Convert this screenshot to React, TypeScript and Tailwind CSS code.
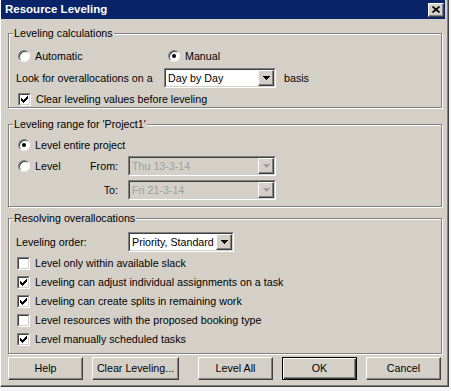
import { ReactNode } from "react";

const raised =
  "border border-t-white border-l-white border-r-[#404040] border-b-[#404040] shadow-[inset_-1px_-1px_0_#808080] bg-[#d4d0c8]";

const Arrow = ({ disabled }: { disabled?: boolean }) => (
  <svg width="7" height="4" viewBox="0 0 7 4" shapeRendering="crispEdges">
    <g fill={disabled ? "#a0a0a0" : "#000"}>
      <rect x="0" y="0" width="7" height="1" />
      <rect x="1" y="1" width="5" height="1" />
      <rect x="2" y="2" width="3" height="1" />
      <rect x="3" y="3" width="1" height="1" />
    </g>
  </svg>
);

const Dropdown = ({ value, width, disabled }: { value: string; width: string; disabled?: boolean }) => (
  <div className={`${width} h-[20px] border border-t-[#808080] border-l-[#808080] border-r-white border-b-white`}>
    <div
      className={`flex h-full border border-t-[#404040] border-l-[#404040] border-r-[#d4d0c8] border-b-[#d4d0c8] ${
        disabled ? "bg-[#d4d0c8] text-[#a0a0a0]" : "bg-white text-black"
      }`}
    >
      <div className="flex-1 flex items-center pl-[2px] whitespace-nowrap overflow-hidden">{value}</div>
      <div className={`w-[16px] h-full flex items-center justify-center ${raised}`}>
        <Arrow disabled={disabled} />
      </div>
    </div>
  </div>
);

const Check = () => (
  <svg width="7" height="7" viewBox="0 0 7 7" shapeRendering="crispEdges">
    <g fill="#000">
      <rect x="0" y="2" width="1" height="3" />
      <rect x="1" y="3" width="1" height="3" />
      <rect x="2" y="4" width="1" height="3" />
      <rect x="3" y="3" width="1" height="3" />
      <rect x="4" y="2" width="1" height="3" />
      <rect x="5" y="1" width="1" height="3" />
      <rect x="6" y="0" width="1" height="3" />
    </g>
  </svg>
);

const Checkbox = ({ label, checked }: { label: string; checked?: boolean }) => (
  <div className="flex items-center h-[19px]">
    <div className="w-[13px] h-[13px] border border-t-[#808080] border-l-[#808080] border-r-white border-b-white">
      <div className="w-full h-full bg-white border border-t-[#404040] border-l-[#404040] border-r-[#d4d0c8] border-b-[#d4d0c8] flex items-center justify-center">
        {checked && <Check />}
      </div>
    </div>
    <span className="ml-[5px]">{label}</span>
  </div>
);

const Radio = ({ label, checked }: { label: string; checked?: boolean }) => (
  <div className="flex items-center">
    <div className="w-[12px] h-[12px] rounded-full bg-white border border-t-[#808080] border-l-[#808080] border-r-white border-b-[#f0f0f0] shadow-[inset_1px_1px_0_#404040] flex items-center justify-center">
      {checked && <div className="w-[4px] h-[4px] rounded-full bg-black" />}
    </div>
    <span className="ml-[5px]">{label}</span>
  </div>
);

const Group = ({ title, className, children }: { title: string; className: string; children: ReactNode }) => (
  <div
    className={`relative ml-[7px] w-[434px] border border-[#808080] shadow-[inset_1px_1px_0_#fff,1px_1px_0_#fff] pl-[7px] ${className}`}
  >
    <span className="absolute left-[4px] top-[-7px] bg-[#d4d0c8] px-[1px] leading-[13px]">{title}</span>
    {children}
  </div>
);

const Button = ({ label, className, isDefault }: { label: string; className: string; isDefault?: boolean }) => (
  <div
    className={`h-[23px] flex items-center justify-center bg-[#d4d0c8] ${
      isDefault
        ? "border border-black shadow-[inset_1px_1px_0_#fff,inset_-1px_-1px_0_#404040,inset_-2px_-2px_0_#808080]"
        : raised
    } ${className}`}
  >
    {label}
  </div>
);

export default function App() {
  return (
    <div className="w-[451px] h-[391px] bg-[#f4f4f4] text-[10.7px] text-black font-['Liberation_Sans',Arial,sans-serif]">
      <div className="w-[449px] h-[387px] bg-[#d4d0c8] border-l border-l-white border-r border-r-[#404040] border-b border-b-[#404040] shadow-[inset_-1px_-1px_0_#808080] flex flex-col">
        <div className="h-[19px] mr-[3px] bg-[#0a246a] flex items-center justify-between pl-[4px] pr-[1px]">
          <span className="text-white font-bold text-[11.5px]">Resource Leveling</span>
          <div className={`w-[16px] h-[14px] flex items-center justify-center ${raised}`}>
            <svg width="8" height="7" viewBox="0 0 8 7">
              <path d="M0.5 0.5 L7.5 6.5 M7.5 0.5 L0.5 6.5" stroke="#000" strokeWidth="1.6" />
            </svg>
          </div>
        </div>

        <Group title="Leveling calculations" className="mt-[14px] h-[75px] pt-[12px]">
          <div className="flex items-center h-[20px] ml-[2px]">
            <div className="w-[150px]">
              <Radio label="Automatic" />
            </div>
            <Radio label="Manual" checked />
          </div>
          <div className="flex items-center h-[20px] mt-[2px]">
            <span className="w-[148px]">Look for overallocations on a</span>
            <Dropdown value="Day by Day" width="w-[112px]" />
            <span className="ml-[8px]">basis</span>
          </div>
          <div className="mt-[2px] ml-[2px]">
            <Checkbox label="Clear leveling values before leveling" checked />
          </div>
        </Group>

        <Group title="Leveling range for 'Project1'" className="mt-[16px] h-[83px] pt-[12px]">
          <div className="flex items-center h-[16px] ml-[2px]">
            <Radio label="Level entire project" checked />
          </div>
          <div className="flex items-center h-[20px] mt-[3px]">
            <div className="w-[70px] pl-[2px]">
              <Radio label="Level" />
            </div>
            <span className="w-[32px] text-right">From:</span>
            <div className="ml-[10px]">
              <Dropdown value="Thu 13-3-14" width="w-[148px]" disabled />
            </div>
          </div>
          <div className="flex items-center h-[20px] mt-[4px]">
            <div className="w-[70px]" />
            <span className="w-[32px] text-right">To:</span>
            <div className="ml-[10px]">
              <Dropdown value="Fri 21-3-14" width="w-[148px]" disabled />
            </div>
          </div>
        </Group>

        <Group title="Resolving overallocations" className="mt-[11px] h-[136px] pt-[13px]">
          <div className="flex items-center h-[20px]">
            <span className="w-[112px]">Leveling order:</span>
            <Dropdown value="Priority, Standard" width="w-[106px]" />
          </div>
          <div className="mt-[2px] ml-[1px] flex flex-col">
            <Checkbox label="Level only within available slack" />
            <Checkbox label="Leveling can adjust individual assignments on a task" checked />
            <Checkbox label="Leveling can create splits in remaining work" checked />
            <Checkbox label="Level resources with the proposed booking type" />
            <Checkbox label="Level manually scheduled tasks" checked />
          </div>
        </Group>

        <div className="flex mt-[3px] ml-[7px]">
          <Button label="Help" className="w-[75px]" />
          <Button label="Clear Leveling..." className="w-[87px] ml-[9px]" />
          <Button label="Level All" className="w-[75px] ml-[19px]" />
          <Button label="OK" className="w-[75px] ml-[9px]" isDefault />
          <Button label="Cancel" className="w-[75px] ml-[9px]" />
        </div>
      </div>
    </div>
  );
}
